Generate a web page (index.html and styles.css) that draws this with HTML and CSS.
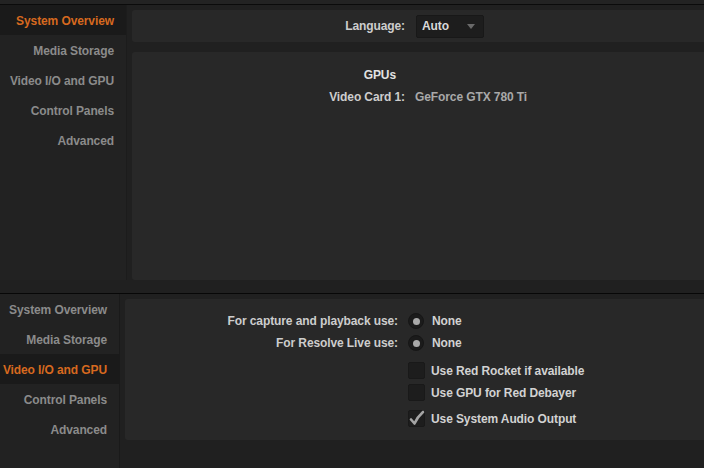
FILE: index.html
```html
<!DOCTYPE html>
<html>
<head>
<meta charset="utf-8">
<link rel="stylesheet" href="styles.css">
</head>
<body>
<section class="shot shot-top">
  <div class="topstrip"></div>
  <div class="window">
    <nav class="sidebar side-top">
      <div class="item active">System Overview</div>
      <div class="item">Media Storage</div>
      <div class="item">Video I/O and GPU</div>
      <div class="item">Control Panels</div>
      <div class="item">Advanced</div>
    </nav>
    <main class="main main-top">
      <div class="panel langbar">
        <div class="grid">
          <span class="label">Language:</span>
          <div class="dropdown"><span>Auto</span><span class="arrow"></span></div>
        </div>
      </div>
      <div class="panel info">
        <div class="grid">
          <span class="label heading">GPUs</span><span></span>
          <span class="label">Video Card 1:</span><span class="value">GeForce GTX 780 Ti</span>
        </div>
      </div>
    </main>
  </div>
  <div class="footstrip"></div>
</section>
<section class="shot shot-bottom">
  <nav class="sidebar side-bottom">
    <div class="item">System Overview</div>
    <div class="item">Media Storage</div>
    <div class="item active">Video I/O and GPU</div>
    <div class="item">Control Panels</div>
    <div class="item">Advanced</div>
  </nav>
  <main class="main main-bottom">
    <div class="panel io">
      <div class="grid io-grid">
        <span class="label">For capture and playback use:</span>
        <span class="opt"><span class="radio"></span>None</span>
        <span class="label">For Resolve Live use:</span>
        <span class="opt"><span class="radio"></span>None</span>
        <span></span>
        <div class="checks">
          <span class="check"><span class="box"></span>Use Red Rocket if available</span>
          <span class="check"><span class="box"></span>Use GPU for Red Debayer</span>
          <span class="check checked"><span class="box"><svg width="17" height="17" viewBox="0 0 17 17"><path d="M3 9.5 L6.5 13.5 C8.5 9 11 5.5 15 2" fill="none" stroke="#a4a4a4" stroke-width="2.6" stroke-linecap="round" stroke-linejoin="round"/></svg></span>Use System Audio Output</span>
        </div>
      </div>
    </div>
  </main>
</section>
</body>
</html>
```
FILE: styles.css
```css
* { box-sizing: border-box; }
html, body { margin: 0; padding: 0; }
body {
  width: 704px;
  height: 468px;
  overflow: hidden;
  background: #212121;
  font-family: "Liberation Sans", Arial, sans-serif;
  font-weight: bold;
  font-size: 12px;
  letter-spacing: -0.1px;
  color: #cfcfcf;
}
.shot-top { height: 293px; display: flex; flex-direction: column; }
.topstrip { height: 5px; background: #232323; border-bottom: 1px solid #0b0b0b; }
.window { display: flex; height: 275px; }
.footstrip { flex: 1; background: #202020; }
.sidebar { background: #222222; display: flex; flex-direction: column; }
.side-top { width: 127px; border-right: 1px solid #1c1c1c; }
.side-bottom { width: 120px; border-right: 1px solid #1a1a1a; }
.item {
  height: 30px;
  display: flex;
  align-items: center;
  justify-content: flex-end;
  padding: 2px 12px 0 0;
  color: #8b8b8b;
  white-space: nowrap;
}
.item.active { background: #1a1a1a; color: #d7691f; }
.main { flex: 1; background: #202020; display: flex; flex-direction: column; }
.main-top { padding: 5px 0 0 5px; gap: 10px; }
.panel { background: #282828; border-radius: 3px 0 0 3px; }
.langbar { height: 32px; display: flex; align-items: center; }
.info { flex: 1; padding-top: 16px; }
.grid {
  display: grid;
  grid-template-columns: 273px auto;
  column-gap: 10px;
  align-items: center;
}
.label { text-align: right; color: #cdcdcd; white-space: nowrap; }
.heading { color: #e2e2e2; padding-right: 9px; }
.info .grid { row-gap: 8px; }
.value { color: #a9a9a9; }
.langbar .grid { column-gap: 11px; }
.dropdown {
  width: 68px;
  height: 23px;
  background: #1d1d1d;
  border: 1px solid #181818;
  border-radius: 2px;
  display: flex;
  align-items: center;
  justify-content: space-between;
  padding: 0 8px 0 5px;
  color: #d8d8d8;
}
.arrow {
  width: 0; height: 0;
  border-left: 4px solid transparent;
  border-right: 4px solid transparent;
  border-top: 5px solid #6a6a6a;
  margin-top: 1px;
}
.shot-bottom {
  height: 175px;
  border-top: 1px solid #070707;
  display: flex;
}
.main-bottom { padding: 5px 0 0 5px; }
.io { height: 141px; padding-top: 13px; }
.io-grid { row-gap: 4px; }
.opt { display: flex; align-items: center; gap: 8px; color: #d2d2d2; height: 18px; }
.radio {
  width: 16px; height: 16px; border-radius: 50%;
  background: #1b1b1b;
  border: 1px solid #161616;
  display: flex; align-items: center; justify-content: center;
}
.radio::after {
  content: ""; width: 7px; height: 7px; border-radius: 50%; background: #a9a9a9;
}
.checks { display: flex; flex-direction: column; padding-top: 6px; }
.check { display: flex; align-items: center; gap: 6px; color: #d2d2d2; height: 17px; }
.check + .check { margin-top: 5px; }
.check.checked { margin-top: 9px; }
.box {
  width: 17px; height: 17px;
  background: #1d1d1d;
  border: 1px solid #191919;
  border-radius: 2px;
  position: relative;
}
.box svg { position: absolute; left: -1px; top: -1px; }
```
